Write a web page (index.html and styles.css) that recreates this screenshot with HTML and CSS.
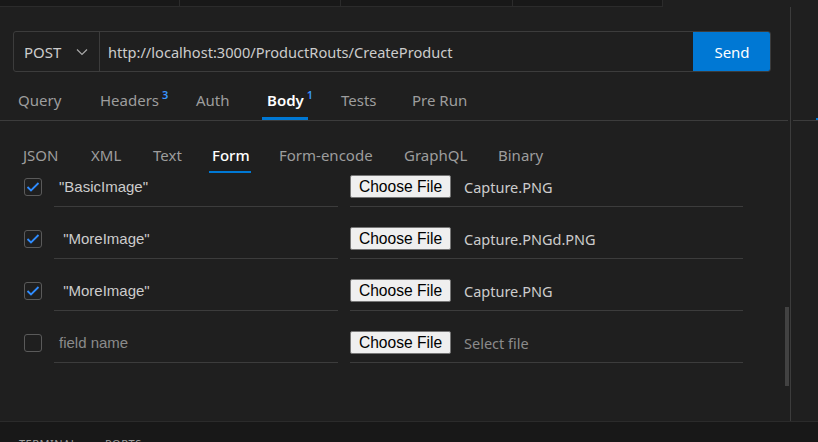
FILE: index.html
```html
<!DOCTYPE html>
<html>
<head>
<meta charset="utf-8">
<link rel="stylesheet" href="styles.css">
</head>
<body>
<div class="top-strip">
  <div class="top-tabs">
    <div class="ttab t1"></div>
    <div class="ttab t2"></div>
    <div class="ttab t3"></div>
    <div class="ttab t4"></div>
  </div>
</div>
<div class="main">
  <div class="left">
    <div class="request-bar">
      <div class="method">
        <span>POST</span>
        <svg class="chev" width="12" height="8" viewBox="0 0 12 8"><path d="M1 1.5 L6 6.5 L11 1.5" fill="none" stroke="#a8a8a8" stroke-width="1.2"/></svg>
      </div>
      <div class="url">http://localhost:3000/ProductRouts/CreateProduct</div>
      <button class="send">Send</button>
    </div>
    <div class="tabs">
      <div class="tab t-query">Query</div>
      <div class="tab t-headers">Headers<sup>3</sup></div>
      <div class="tab t-auth">Auth</div>
      <div class="tab t-body active"><span class="lbl">Body<sup>1</sup></span></div>
      <div class="tab t-tests">Tests</div>
      <div class="tab t-pre">Pre Run</div>
    </div>
    <div class="body-tabs">
      <div class="btab w-json">JSON</div>
      <div class="btab w-xml">XML</div>
      <div class="btab w-text">Text</div>
      <div class="btab w-form active"><span class="lbl">Form</span></div>
      <div class="btab w-fe">Form-encode</div>
      <div class="btab w-gql">GraphQL</div>
      <div class="btab">Binary</div>
    </div>
    <div class="rows">
      <div class="row">
        <div class="check on"><svg width="14" height="12" viewBox="0 0 14 12"><path d="M1.5 6 L5 9.5 L12.5 2" fill="none" stroke="#2f8cff" stroke-width="1.8"/></svg></div>
        <div class="name">"BasicImage"</div>
        <div class="file"><button class="file-btn">Choose File</button><span class="fname">Capture.PNG</span></div>
      </div>
      <div class="row">
        <div class="check on"><svg width="14" height="12" viewBox="0 0 14 12"><path d="M1.5 6 L5 9.5 L12.5 2" fill="none" stroke="#2f8cff" stroke-width="1.8"/></svg></div>
        <div class="name">&nbsp;"MoreImage"</div>
        <div class="file"><button class="file-btn">Choose File</button><span class="fname">Capture.PNGd.PNG</span></div>
      </div>
      <div class="row">
        <div class="check on"><svg width="14" height="12" viewBox="0 0 14 12"><path d="M1.5 6 L5 9.5 L12.5 2" fill="none" stroke="#2f8cff" stroke-width="1.8"/></svg></div>
        <div class="name">&nbsp;"MoreImage"</div>
        <div class="file"><button class="file-btn">Choose File</button><span class="fname">Capture.PNG</span></div>
      </div>
      <div class="row">
        <div class="check"></div>
        <div class="name placeholder">field name</div>
        <div class="file"><button class="file-btn">Choose File</button><span class="fname placeholder">Select file</span></div>
      </div>
    </div>
    <div class="scrollbar"></div>
  </div>
  <div class="right">
    <div class="right-line"><span class="blue-mark"></span></div>
  </div>
</div>
<div class="bottom">
  <span class="ptab">TERMINAL</span>
  <span class="ptab">PORTS</span>
</div>
</body>
</html>
```

FILE: styles.css
```css
* { box-sizing: border-box; }
html, body {
  margin: 0;
  padding: 0;
  width: 818px;
  height: 442px;
  overflow: hidden;
  background: #1f1f1f;
  font-family: "Noto Sans", "Open Sans", sans-serif;
}
.top-strip {
  height: 7px;
  display: flex;
}
.top-tabs {
  width: 663px;
  height: 7px;
  display: flex;
  background: #181818;
  border-bottom: 1px solid #2b2b2b;
  border-right: 1px solid #2b2b2b;
}
.ttab { height: 6px; border-right: 1px solid #2b2b2b; }
.t1 { width: 180px; }
.t2 { width: 161px; }
.t3 { width: 172px; }
.t4 { flex: 1; border-right: none; }

.main {
  display: flex;
  height: 414px;
}
.left {
  position: relative;
  width: 791px;
  border-right: 1px solid #3c3c3c;
  padding-top: 24px;
}
.right { flex: 1; padding-top: 113px; }
.right-line {
  position: relative;
  margin-left: 2px;
  height: 1px;
  background: #3c3c3c;
}
.blue-mark {
  position: absolute;
  right: 0;
  top: -2px;
  width: 2px;
  height: 2px;
  background: #0078d4;
}

.request-bar {
  margin-left: 13px;
  width: 758px;
  height: 41px;
  display: flex;
  border: 1px solid #3c3c3c;
  border-radius: 3px;
  overflow: hidden;
}
.method {
  width: 86px;
  display: flex;
  align-items: center;
  padding-left: 10px;
  border-right: 1px solid #3c3c3c;
  color: #cccccc;
  font-size: 15px;
}
.chev { margin-left: 15px; }
.url {
  flex: 1;
  display: flex;
  align-items: center;
  padding-left: 8px;
  color: #cccccc;
  font-size: 14.6px;
}
.send {
  width: 78px;
  border: none;
  margin: -1px -1px -1px 0;
  height: 41px;
  background: #0078d4;
  color: #ffffff;
  font-family: inherit;
  font-size: 15px;
  border-radius: 0 3px 3px 0;
}

.tabs {
  margin-top: 11px;
  height: 38px;
  display: flex;
  border-bottom: 1px solid #3c3c3c;
  margin-right: 2px;
  padding-left: 18px;
}
.tab {
  position: relative;
  color: #9d9d9d;
  font-size: 15px;
  padding-top: 7px;
  height: 37px;
  white-space: nowrap;
}
.tab sup {
  color: #3794ff;
  font-size: 11px;
  font-weight: 600;
  vertical-align: 0;
  position: relative;
  top: -7px;
  margin-left: 3px;
}
.t-query { width: 82px; }
.t-headers { width: 96px; }
.t-auth { width: 71px; }
.t-body { width: 74px; }
.t-tests { width: 71px; }
.tab.active { color: #ffffff; font-weight: 600; }
.tab.active .lbl { position: relative; display: inline-block; height: 30px; }
.tab.active .lbl::after {
  content: "";
  position: absolute;
  left: -5px;
  width: 46px;
  bottom: 0;
  height: 3px;
  background: #0078d4;
}

.body-tabs {
  display: flex;
  padding-left: 23px;
  margin-top: 24px;
  height: 28px;
}
.btab {
  position: relative;
  color: #9d9d9d;
  font-size: 15px;
  height: 28px;
  white-space: nowrap;
}
.w-json { width: 68px; }
.w-xml { width: 62px; }
.w-text { width: 59px; }
.w-form { width: 67px; }
.w-fe { width: 125px; }
.w-gql { width: 94px; }
.btab.active { color: #ffffff; font-weight: 500; }
.btab.active .lbl { position: relative; display: inline-block; height: 28px; }
.btab.active .lbl::after {
  content: "";
  position: absolute;
  left: -3px;
  width: 42px;
  bottom: 0;
  height: 2px;
  background: #0078d4;
}

.rows {
  margin-top: 2px;
  display: flex;
  flex-direction: column;
  gap: 20px;
}
.row {
  display: flex;
  height: 32px;
  padding-left: 24px;
}
.check {
  width: 18px;
  height: 18px;
  margin-top: 3px;
  border: 1px solid #5a5a5a;
  border-radius: 3px;
  display: flex;
  align-items: center;
  justify-content: center;
}
.name {
  width: 284px;
  margin-left: 12px;
  border-bottom: 1px solid #3c3c3c;
  color: #cccccc;
  font-family: "Liberation Sans", Arial, sans-serif;
  font-size: 15px;
  padding-left: 5px;
  padding-top: 3px;
}
.file {
  width: 393px;
  margin-left: 12px;
  border-bottom: 1px solid #3c3c3c;
  display: flex;
  align-items: flex-start;
}
.file-btn {
  width: 101px;
  height: 23px;
  margin-top: 0;
  background: #efefef;
  border: 1px solid #767676;
  border-radius: 2px;
  color: #000000;
  font-family: "Liberation Sans", Arial, sans-serif;
  font-size: 15.6px;
  padding: 0;
  line-height: 20px;
}
.fname {
  margin-left: 13px;
  color: #cccccc;
  font-size: 14.5px;
  padding-top: 2px;
}
.placeholder { color: #8b8b8b; }

.scrollbar {
  position: absolute;
  left: 785px;
  top: 300px;
  width: 4px;
  height: 79px;
  background: #424242;
}

.bottom {
  height: 21px;
  background: #181818;
  border-top: 1px solid #2b2b2b;
  padding-left: 19px;
  padding-top: 14px;
  display: flex;
  gap: 28px;
}
.ptab {
  color: #9d9d9d;
  font-size: 11px;
  letter-spacing: 0.5px;
}
```
